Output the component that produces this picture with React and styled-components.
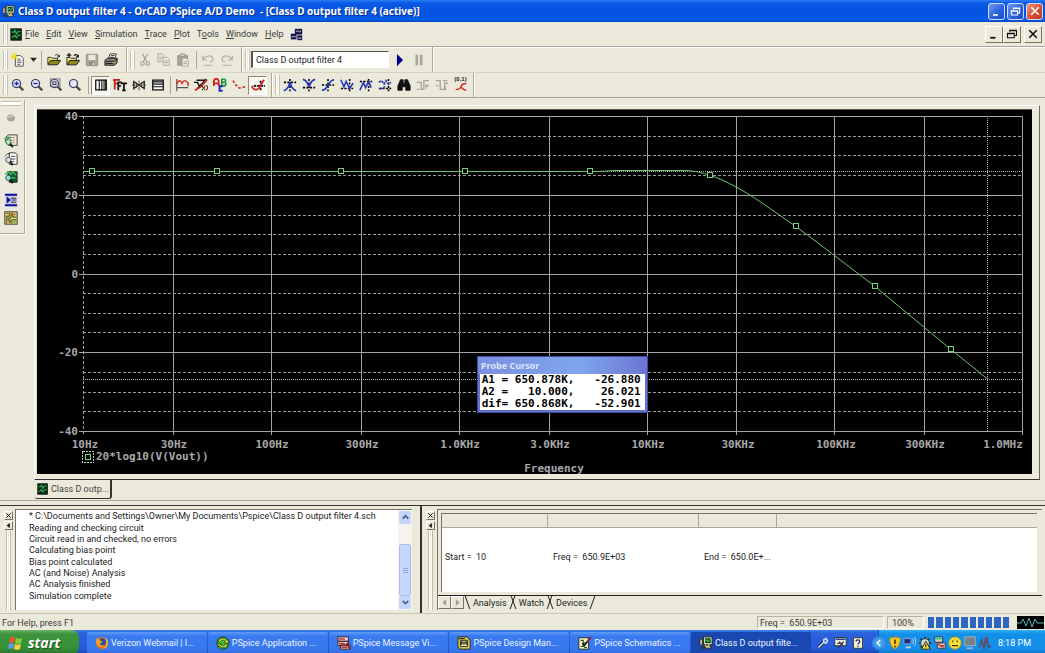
import React from 'react';
import styled, { createGlobalStyle, css } from 'styled-components';

const FACE = '#ebe9d9';
const SHADOW = '#aca899';
const UI_FONT = 'Roboto, "Liberation Sans", sans-serif';
const MONO_FONT = '"DejaVu Sans Mono", "Liberation Mono", monospace';

const GlobalStyle = createGlobalStyle`
  * { box-sizing: border-box; }
  body { margin: 0; background: ${FACE}; }
  button, input { font: inherit; color: inherit; margin: 0; padding: 0; }
  button { border: 0; background: none; }
  ul { list-style: none; margin: 0; padding: 0; }
`;

/* ---------- icons, all on a 16 x 16 grid ---------- */

const zoomGlass = (
  <>
    <path d="M9.5 9.5 14 14" stroke="#222" strokeWidth="2.4" />
    <path d="M10.5 10 14 13.4" stroke="#a98b3a" strokeWidth="1" />
    <circle cx="6.3" cy="6.3" r="4.6" fill="#e6e6f4" stroke="#333a66" strokeWidth="1.4" />
  </>
);

const cross = (x = 8, y = 8) => (
  <path d={`M${x} 1V15M1 ${y}H15`} stroke="#000" strokeWidth="1.8" strokeDasharray="2.5 1.5" />
);

const folder = (
  <>
    <path d="M1 13V5h4l1 1h6v3" fill="#f3e87a" stroke="#222" />
    <path d="M1 13.5 4 8.5h11.5L12 13.5Z" fill="#8f8a1c" stroke="#111" />
  </>
);

const page = (x, y) => (
  <path d={`M${x} ${y}h5l2 2v7h-7zM${x + 1.5} ${y + 4}h4M${x + 1.5} ${y + 6}h4`} fill={FACE} stroke="#aaa796" />
);

const scopeIcon = (
  <>
    <rect x="1" y="1" width="13" height="14" fill="#0b2a14" stroke="#111" />
    <path d="M2 5h3l1-2 2 4 2-3h3M2 11h2l2-2 2 3 2-3h3" fill="none" stroke="#35b04f" strokeWidth="1.5" />
  </>
);

const pcIcon = (
  <>
    <rect x="5" y="1" width="10" height="9" fill="#d8d4c4" stroke="#222" />
    <rect x="7" y="2.5" width="6.5" height="5.5" fill="#0b4a1c" />
    <path d="M7.5 6 9 4l1.5 2.5L13 3.5" fill="none" stroke="#5cf06d" />
    <path d="M1 3.5h3v7H1zM2 13h7l1-2h3l1 3H2z" fill="#c9c5b4" stroke="#222" />
    <path d="m7 10 2 3 3-4" fill="none" stroke="#d8cf32" strokeWidth="1.5" />
  </>
);

const ICONS = {
  app: pcIcon,
  scope: scopeIcon,
  windows: (
    <>
      <rect x="6" y="1" width="9" height="7" fill="#141450" />
      <rect x="1" y="7" width="7" height="7" fill="#141450" />
      <rect x="9" y="9" width="6" height="6" fill="#141450" />
      <path d="M7.5 5 9.5 3l2 2 2-1.5M2 11h2l1-1 2 1M10 12.5h4" fill="none" stroke="#fff" />
    </>
  ),
  new: (
    <>
      <path d="M5 3h6l3 3v9H5z" fill="#fff" stroke="#444" />
      <path d="M7 7h4M7 9h5M7 11h5M7 13h4" stroke="#555" />
      <path d="M4 0v8M0 4h8M1 1l6 6M7 1 1 7" stroke="#e7dc22" strokeWidth="1.2" />
    </>
  ),
  open: <>{folder}<path d="M9 3c2-2 4-1 5 1m0-2v2.5h-2.5" fill="none" stroke="#111" /></>,
  append: <>{folder}<path d="M3.5 0v5M1 2.5h5M9 3c2-2 4-1 5 1m0-2v2.5h-2.5" fill="none" stroke="#111" strokeWidth="1.4" /></>,
  save: (
    <>
      <path d="M1.5 1.5h13v13h-13z" fill="#aaa798" stroke="#8e8b7c" />
      <path d="M4 2h8v6H4z" fill={FACE} /><path d="M5 10h6v4H5z" fill="#8e8b7c" /><path d="M9 11h1.500v3H9z" fill={FACE} />
    </>
  ),
  print: (
    <>
      <path d="M5 7 7 1h7l-2 6" fill="#fff" stroke="#222" />
      <path d="M1 8.5 4 6h11v5l-3 3H1z" fill="#85857b" stroke="#111" />
      <path d="M2 9.5h9M2 12h9M12 9l3-2M8 3h4M7 5h4" stroke="#111" />
      <path d="M9 11h2" stroke="#e3da3d" />
    </>
  ),
  cut: <path d="m5 1 5 9M11 1 6 10M5 10a2 2 0 1 0 .1 4 2 2 0 0 0 0-4m6 0a2 2 0 1 0 .1 4 2 2 0 0 0 0-4" fill="none" stroke="#a5a293" strokeWidth="1.3" />,
  copy: <>{page(1, 1)}{page(7, 5)}</>,
  paste: (
    <>
      <path d="M2 3h11v11H2z" fill="#a8a596" stroke="#96937f" />
      <path d="M5 1h5v3H5z" fill="#d4d1c0" stroke="#96937f" />
      {page(7, 6)}
    </>
  ),
  undo: <path d="M2 3v5h5M2.5 7.5C5 3 11 2 13 5s0 5-3 5M3 14h10" fill="none" stroke="#b1ae9f" strokeWidth="1.4" />,
  redo: <path d="M14 3v5H9M13.500 7.500C11 3 5 2 3 5s0 5 3 5M3 14h10" fill="none" stroke="#b1ae9f" strokeWidth="1.400" />,
  play: <path d="M4.500 1v14l7-7z" fill="#00008c" />,
  pause: <path d="M4 2h3v12H4zM9 2h3v12H9z" fill="#aaa797" />,
  zoomIn: <>{zoomGlass}<path d="M4 6.300h4.600M6.300 4v4.600" stroke="#1818b8" strokeWidth="1.500" /></>,
  zoomOut: <>{zoomGlass}<path d="M4 6.300h4.600" stroke="#1818b8" strokeWidth="1.500" /></>,
  zoomArea: <>{zoomGlass}<rect x="1.500" y="1" width="11" height="9" fill="none" stroke="#6b6b88" /><rect x="4.500" y="4.500" width="3.500" height="3" fill="none" stroke="#222" /></>,
  zoomFit: zoomGlass,
  logX: (
    <>
      <path d="M2 2.500h12v11H2z" fill="#fff" stroke="#111" strokeWidth="1.500" />
      <path d="M6 2v12M9 2v12M11.500 2v12M13.500 2v12" stroke="#111" strokeWidth="1.300" />
    </>
  ),
  fft: (
    <>
      <path d="M2 13V2h6M2 6.500h4M0 2.500h3" fill="none" stroke="#c42020" strokeWidth="2" />
      <path d="M6 14V5h4M6 9h3M9 6h7M12.500 6v9M10.500 14h4" fill="none" stroke="#111" strokeWidth="2" />
    </>
  ),
  performance: (
    <>
      <path d="m2 4 12 8M2 12l12-8M2 3v10M14 3v10" fill="none" stroke="#222" strokeWidth="1.500" />
      <path d="M0 8h4m8 0h4M5 5v6M11 5v6M8 3v3M8 10v4" stroke="#333" />
    </>
  ),
  logY: (
    <>
      <path d="M2 2.500h12v11H2z" fill="#fff" stroke="#111" strokeWidth="1.500" />
      <path d="M2 4.500h12M2 7h12M2 10h12" stroke="#111" strokeWidth="1.300" />
    </>
  ),
  addTrace: <><path d="M2 1v14M2 11h13" stroke="#555" strokeWidth="1.300" /><path d="M2 7c2-5 4-5 6-1 2-4 4-4 7 0v3" fill="none" stroke="#d22" strokeWidth="1.700" /></>,
  evalFn: (
    <>
      <path d="M0 5h4l2 4M3 2.500h10M4 12 14 1" fill="none" stroke="#111" strokeWidth="1.600" />
      <path d="m1 14 7-4 7-8" fill="none" stroke="#c82020" strokeWidth="1.800" />
      <path d="m9 9 4 5M13 9l-4 5M14 8c2 2 2 4 0 6" fill="none" stroke="#6a2a22" strokeWidth="1.200" />
    </>
  ),
  label: (
    <>
      <path d="M1 9V3l1.500-2H5l1.500 2v6M1 6h5.500" fill="none" stroke="#d22020" strokeWidth="2" />
      <path d="M10 1.500V9h3.500l1.500-2-1.500-2H10h3.500l1-1.500-1-2z" fill="none" stroke="#14963a" strokeWidth="1.800" />
      <path d="M11 9.500H7.500v5H11" fill="none" stroke="#2222c8" strokeWidth="2.200" />
    </>
  ),
  marks: <path d="m1 3 3.500 5 4 3.500L15 10" fill="none" stroke="#d22" strokeWidth="1.800" strokeDasharray="3 2" />,
  cursor: (
    <>
      <path d="M11 3v12M3 9h13" stroke="#111" strokeWidth="2" strokeDasharray="3 1" />
      <path d="M1 9c1 5 7 6 9 1l5-8" fill="none" stroke="#d22" strokeWidth="2" />
    </>
  ),
  peak: <>{cross(8, 5)}<path d="M1 14.500c4-1 6-5 7-10 1 5 3 9 7 10" fill="none" stroke="#2436b8" strokeWidth="2" /></>,
  trough: <>{cross(8, 11)}<path d="M1 1.500c4 1 6 5 7 9 1-4 3-8 7-9" fill="none" stroke="#2436b8" strokeWidth="2" /></>,
  slope: <>{cross(8, 8)}<path d="M1 14c8 0 6-11 14-12" fill="none" stroke="#2436b8" strokeWidth="2" /></>,
  min: <>{cross(11, 12)}<path d="m1 2 3.500 8L7 4l4 8 4-6" fill="none" stroke="#2436b8" strokeWidth="1.800" /></>,
  max: <>{cross(11, 4)}<path d="m1 14 4-9 2.500 6L11 4l3 7" fill="none" stroke="#2436b8" strokeWidth="1.800" /></>,
  point: <>{cross(12, 12)}<path d="m1 5 3-2 3 4 2-4 3 4 3-2M2 12h4l2-3" fill="none" stroke="#2436b8" strokeWidth="1.800" strokeDasharray="3 1" /></>,
  search: <path d="M4 2h3v4h2V2h3l3 7v5h-5v-4H6v4H1V9zM3.500 10v2M12.500 10v2" fill="#111" stroke="#111" />,
  prevStep: <path d="M1 5h5v8h3V3h6M1 13h3M10 9h5M12 7v5" fill="none" stroke="#aaa797" strokeWidth="1.500" />,
  nextStep: <path d="M1 3h5v10h5V6h4M1 9h3M9 3h5M12 10v4" fill="none" stroke="#aaa797" strokeWidth="1.500" />,
  markPoint: <path d="M1 10c5 0 6-1 7-4s3-4 7-4M7 6c2 2 4 5 8 5" fill="none" stroke="#d22" strokeWidth="1.900" />,
  blob: <><ellipse cx="8" cy="8" rx="4.500" ry="4" fill="#aaa79a" /><path d="M5 8c1-2 3-3 5-2M10 5l3-1" fill="none" stroke="#eceadb" /></>,
  sideA: (
    <>
      <path d="M1 5 5 1h10v12H5z" fill="#e7ece4" stroke="#333" />
      <path d="M7 4h6M7 7h6M7 10h5" stroke="#c33" strokeDasharray="2 1" />
      <path d="M2 4h6M1 9l4-4" stroke="#209a45" strokeWidth="1.500" />
      <circle cx="5" cy="9" r="3" fill="#bfe6cc" stroke="#157a38" /><path d="m7 11 3 4" stroke="#111" strokeWidth="2" />
    </>
  ),
  sideB: (
    <>
      <path d="M6 1h7l2 2v11H6z" fill="#fff" stroke="#222" />
      <path d="M8 5h5M8 8h5M8 11h4M1 5l3-3h3" fill="none" stroke="#333" />
      <circle cx="5" cy="9" r="3" fill="#d6e8ef" stroke="#444" /><path d="m7 11 3 4" stroke="#111" strokeWidth="2" />
    </>
  ),
  sideC: (
    <>
      <path d="M4 2h11v12H6z" fill="#0c5c30" stroke="#222" />
      <path d="m1 5 4-3 3 3 2-3 4 4M8 9h5" fill="none" stroke="#46c060" strokeWidth="1.500" />
      <circle cx="5" cy="9" r="3" fill="#9cdcc8" stroke="#135a5a" /><path d="m7 11 3 4" stroke="#111" strokeWidth="2" />
    </>
  ),
  sideD: (
    <>
      <rect x="2" y="1" width="13" height="14" fill="#c8cbe8" />
      <path d="M1 2h14M1 14h14" stroke="#1010a0" strokeWidth="2.500" />
      <path d="m3 4 5 4-5 4z" fill="#1010a0" /><path d="M8 6h6M9 8h5M8 10.500h6" stroke="#222" />
    </>
  ),
  sideE: (
    <>
      <rect x="1" y="1" width="14" height="14" fill="#e8de78" stroke="#222" />
      <path d="M2 6h4V2M8 2v6H2M10 2v5h4M3 14v-4h4v4M9 14v-4h5" fill="none" stroke="#27331a" />
      <path d="M3 3h2M11 4h2M5 12h2" stroke="#d22" strokeWidth="1.500" />
      <path d="M9 5h1M11 12h2" stroke="#2a9a3c" strokeWidth="2" />
    </>
  ),
  firefox: (
    <>
      <circle cx="8" cy="8" r="7" fill="#e8701a" />
      <circle cx="8.500" cy="6.500" r="4" fill="#2d4fa6" />
      <path d="M1 6c1 6 6 8 10 5-4 1-6-1-5-3l3-1-3-2C4 4 3 3 3 2 1 3 1 5 1 6" fill="#f3a12c" />
      <path d="M12 3c3 3 3 8-1 11" fill="none" stroke="#f6c544" strokeWidth="1.300" />
    </>
  ),
  arrows: (
    <>
      <circle cx="8" cy="8" r="7" fill="#49c93c" stroke="#0b3b12" />
      <path d="M3 7c0-5 7-6 9-2l2-1v4H9l2-2C9 4 6 4 5 7z" fill="#f4ef32" stroke="#0d3314" strokeWidth=".8" />
      <path d="M13 9c0 5-7 6-9 2l-2 1V9h5l-2 1c2 2 5 2 6-1z" fill="#f4ef32" stroke="#0d3314" strokeWidth=".8" />
    </>
  ),
  message: (
    <>
      <path d="M1 1h12v5H1zM1 6h12v5H1zM4 10h11v5H4z" fill="#e6e2dc" stroke="#431414" />
      <path d="M2 3.500h7M2 8.500h7M5 13h7" stroke="#c63030" strokeWidth="1.800" />
      <path d="m11 8 4 7" stroke="#7b2020" strokeWidth="2" />
    </>
  ),
  design: (
    <>
      <path d="M1 1h11l3 4v10H3L1 12z" fill="#d7c75b" stroke="#201d08" />
      <path d="M4 5h8v7H4z" fill="#f6f1c0" stroke="#222" />
      <path d="M5 10V7h2v3m2 0V7h2v3M2 3h7" fill="none" stroke="#30300f" strokeWidth="1.300" />
    </>
  ),
  schematic: (
    <>
      <path d="M1 2h11v13H1z" fill="#f2f3c4" stroke="#222" />
      <path d="M3 5h3v3h3M3 12h3v-2M7 13h3" fill="none" stroke="#2d4b1c" strokeWidth="1.200" />
      <path d="m5 8 2 3 7-9" fill="none" stroke="#111" strokeWidth="2" /><path d="m10 7 5-6" stroke="#c22a2a" strokeWidth="1.500" />
    </>
  ),
  pen: <><path d="m2 14 7-7" stroke="#1d2030" strokeWidth="4" /><path d="m2 14 7-7 3 1 2-3-2-3-3 2v3" fill="none" stroke="#dfe6f6" strokeWidth="2" /></>,
  desktop: (
    <>
      <rect x="1" y="2" width="14" height="10" fill="#f2f0e5" stroke="#222" />
      <path d="M2 4h12" stroke="#26408f" strokeWidth="2" />
      <path d="m5 15 7-8M6 7l5 4M4 9h3" stroke="#333" strokeWidth="1.600" />
    </>
  ),
  help: (
    <>
      <path d="M2 1h12v14H2z" fill="#f8f3ca" stroke="#222" />
      <path d="M5.500 6c0-3 5-3 5 0 0 2-2.500 2-2.500 4m0 1.500v1.800" fill="none" stroke="#1a2c7a" strokeWidth="1.800" />
    </>
  ),
  shield: <><path d="M8 1c3 1 5 1 6 1 0 6-1 10-6 13C3 12 2 8 2 2c2 0 4 0 6-1" fill="#f4c92b" stroke="#b58110" /><path d="M8 4v5m0 2v2" stroke="#5d3f00" strokeWidth="2" /></>,
  network: (
    <>
      <path d="M1 3h8v6H1z" fill="#1c2f7c" stroke="#8fa9df" /><path d="M3 12h6v2H3z" fill="#c8ccd6" />
      <path d="M11 3c1 2 1 4 0 6m2-8c2 3 2 7 0 10" fill="none" stroke="#c9dbf8" />
    </>
  ),
  gear: (
    <>
      <path d="M8 1v14M1 8h14M3 3l10 10M13 3 3 13" stroke="#333" strokeWidth="2" />
      <circle cx="8" cy="8" r="5" fill="#d7d4c6" stroke="#333" /><path d="m9 6 5 9H4z" fill="#f4e02e" stroke="#222" /><path d="M9 9v4" stroke="#111" />
    </>
  ),
  remote: (
    <>
      <path d="M2 1h9v6H2zM5 8h9v6H5z" fill="#d8d5c6" stroke="#333" />
      <path d="M3 3h7" stroke="#2c8" strokeWidth="2" /><path d="m4 8 8 5M7 11h6" stroke="#c33" strokeWidth="1.600" />
    </>
  ),
  smiley: <><circle cx="8" cy="8" r="7" fill="#fbdf35" stroke="#c39a12" /><path d="M5.500 5v2M10.500 5v2M4.500 11h7" stroke="#3d2e00" strokeWidth="1.300" /></>,
  monitor: <><rect x="2" y="1" width="12" height="10" fill="#768089" stroke="#a9b3bd" /><path d="M4 14h7" stroke="#a9b3bd" strokeWidth="2" /></>,
  spikes: <><path d="m1 13 3-8 3 9 3-12 2 11 3-2" fill="none" stroke="#3b5a86" strokeWidth="2.200" /><path d="m5 13 4-11 3 8" fill="none" stroke="#9a3c3c" strokeWidth="1.200" /></>,
  minimize: <path d="M3 13h7" stroke="currentColor" strokeWidth="2.400" />,
  restore: <path d="M5 5V3h9v7h-3M2 7h9v6H2zM5 3.500h9M2 7.500h9" fill="none" stroke="currentColor" strokeWidth="1.500" />,
  close: <path d="m3 3 10 10M13 3 3 13" stroke="currentColor" strokeWidth="2.200" />,
  left: <path d="M11 2v12L4 8z" fill="currentColor" />,
  right: <path d="M5 2v12l7-6z" fill="currentColor" />,
  down: <path d="M2 5h12l-6 7z" fill="currentColor" />,
  chevronUp: <path d="m3 10 5-5 5 5" fill="none" stroke="#4d6185" strokeWidth="3" />,
  chevronDown: <path d="m3 5 5 5 5-5" fill="none" stroke="#4d6185" strokeWidth="3" />,
  chevronLeft: <path d="M10 3 5 8l5 5" fill="none" stroke="#fff" strokeWidth="2.200" />,
};

const Svg = styled.svg`
  display: block;
  flex: none;
  width: ${({ $size }) => $size}px;
  height: ${({ $size }) => $size}px;
`;

const Icon = ({ name, size = 14 }) => (
  <Svg $size={size} viewBox="0 0 16 16" fill="none" aria-hidden="true">
    {ICONS[name]}
  </Svg>
);

/* ---------- window frame ---------- */

const Desktop = styled.div`
  display: flex;
  flex-direction: column;
  min-height: 100vh;
  background: ${FACE};
  color: #222;
  font: 9px/12px ${UI_FONT};
  cursor: default;
`;

const TitleBar = styled.header`
  display: flex;
  align-items: center;
  height: 22px;
  padding: 0 2px;
  gap: 3px;
  background: linear-gradient(#2a7cf4 0, #0a5ae6 3px, #0351e0 14px, #0660f4 19px, #0546c4 22px);
`;

const Title = styled.h1`
  flex: 1;
  margin: 0;
  color: #fff;
  font: bold 10px/20px "Noto Sans", "Open Sans", sans-serif;
  text-shadow: 1px 1px #0a2f8c;
  white-space: pre;
`;

const CaptionButton = styled.button`
  display: grid;
  place-items: center;
  width: 17px;
  height: 17px;
  border: 1px solid #cfdcf8;
  border-radius: 3px;
  color: #fff;
  background: ${({ $close }) =>
    $close ? 'linear-gradient(135deg, #ee9a80, #d8492a 60%, #c23c1c)' : 'linear-gradient(135deg, #6f9bf2, #2a5fdc 60%, #1d4fc4)'};
`;

const CaptionGroup = styled.div`
  display: flex;
  gap: 2px;
`;

const MenuBar = styled.nav`
  display: flex;
  align-items: center;
  height: 25px;
  padding: 0 3px;
  border-bottom: 1px solid ${SHADOW};
  box-shadow: 0 1px #fff;
`;

const MenuList = styled.ul`
  display: flex;
  flex: 1;
  align-items: center;
  gap: 7px;
  padding-left: 2px;
  color: #3c3c3c;
`;

const MdiButton = styled.button`
  display: grid;
  place-items: center;
  width: 18px;
  height: 17px;
  color: #111;
  border: 1px solid;
  border-color: #fff #77745f #77745f #fff;
  margin-left: ${({ $apart }) => ($apart ? 3 : 0)}px;
`;

/* ---------- toolbars ---------- */

const ToolRow = styled.div`
  display: flex;
  height: ${({ $height }) => $height}px;
  border-bottom: 1px solid ${({ $last }) => ($last ? '#a9a694' : '#d6d3c2')};
`;

const Toolbar = styled.div`
  display: flex;
  align-items: center;
  padding: 0 ${({ $end = 4 }) => $end}px 0 3px;
  border-right: 1px solid ${SHADOW};
  box-shadow: 1px 0 #fff;
`;

const Grip = styled.span`
  flex: none;
  width: 5px;
  height: 20px;
  margin-right: ${({ $gap = 1 }) => $gap}px;
  border: solid #c4c1b0;
  border-width: 0 1px;
  background: linear-gradient(90deg, #fff 1px, transparent 1px 2px, #fff 2px);
`;

const Divider = styled.span`
  width: 1px;
  height: 18px;
  margin: 0 ${({ $after = 2 }) => $after}px 0 ${({ $before = 3 }) => $before}px;
  background: ${SHADOW};
`;

const ToolButton = styled.button`
  display: grid;
  place-items: center;
  width: ${({ $narrow }) => ($narrow ? 12 : 19)}px;
  height: 19px;
  border: 1px solid transparent;
  ${({ $pressed }) =>
    $pressed &&
    css`
      border-color: #8e8b7a #fff #fff #8e8b7a;
      background: #f8f7f0;
    `}
`;

const PointLabel = styled.span`
  height: 5px;
  color: #222;
  font: bold 6px/5px "Liberation Sans", sans-serif;
`;

const ProfileInput = styled.input`
  width: 138px;
  height: 17px;
  margin-right: 1px;
  padding: 0 3px !important;
  border: 1px solid;
  border-color: #55534a #fff #fff #55534a;
  border-left-width: 2px;
  outline: 0;
  background: #fff;
`;

const tools = (names, pressed = []) =>
  names.map((name) => (
    <ToolButton key={name} type="button" title={name} aria-label={name} $pressed={pressed.includes(name)}>
      <Icon name={name} />
    </ToolButton>
  ));

/* ---------- plot ---------- */

const Workspace = styled.main`
  display: flex;
  flex: 1;
  gap: 9px;
  padding-right: 5px;
`;

const SideBar = styled.aside`
  display: flex;
  flex-direction: column;
  align-items: center;
  align-self: flex-start;
  width: 25px;
  margin-top: 2px;
  padding: 1px 2px 6px 0;
  border: solid ${SHADOW};
  border-width: 0 1px 1px 0;
  box-shadow: 1px 1px #fff;
`;

const SideGrip = styled.span`
  width: 20px;
  height: 5px;
  border: solid #c4c1b0;
  border-width: 1px 0;
  background: #fff;
`;

const SideGroup = styled.div`
  display: grid;
  grid-auto-rows: 18px;
  place-items: center;
  margin-top: ${({ $top }) => $top}px;
`;

const Document = styled.div`
  flex: 1;
  min-width: 0;
  padding-top: 7px;
`;

const PlotFrame = styled.section`
  position: relative;
  padding: 3px 7px 5px 2px;
  border: 1px solid;
  border-color: #fff #6c6a5c #33322c #fff;
`;

const PlotSvg = styled.svg`
  display: block;
  width: 100%;
  height: auto;
  background: #000;
  border-top: 1px solid #5a584d;
  text {
    fill: #a8a8a8;
    font: bold 11px ${MONO_FONT};
  }
`;

const Probe = styled.div`
  position: absolute;
  top: 67%;
  left: 44%;
  padding: 0 2px 2px;
  background: #6373cc;
  border: 1px solid #3e4b9d;
`;

const ProbeTitle = styled.div`
  height: 17px;
  margin: 0 -2px;
  padding: 0 3px;
  background: linear-gradient(90deg, #7b8fe0, #7ea6ec 60%, #6c74d2);
  color: #dbe5fb;
  font: bold 9px/18px "Open Sans", "Noto Sans", sans-serif;
`;

const ProbeBody = styled.pre`
  margin: 0;
  padding: 0 4px 0 2px;
  background: #fff;
  color: #000;
  font: bold 11px/12px ${MONO_FONT};
`;

const V_LINES = [
  [46, '10Hz', 48], [136, '30Hz', 137], [234, '100Hz', 235], [324, '300Hz', 325], [422, '1.0KHz', 423],
  [512, '3.0KHz', 513], [610, '10KHz', 611], [699, '30KHz', 701], [797, '100KHz', 799], [887, '300KHz', 888], [985, '1.0MHz', 966],
];
const H_LINES = [[6, '40'], [85, '20'], [164, '0'], [242, '-20'], [321, '-40']];
const MINOR = [26, 45, 65, 105, 124, 144, 183, 203, 222, 262, 282, 301];
const MARKS = [[55, 61], [180, 61], [304, 61], [428, 61], [553, 61], [673, 65], [759, 116], [838, 176], [914, 239]];

const Plot = () => (
  <PlotSvg viewBox="0 0 995 364" role="img" aria-label="20*log10(V(Vout)) against frequency">
    <g stroke="#a3a3a3" shapeRendering="crispEdges">
      {V_LINES.map(([x], i) => (
        <path key={x} d={`M${x}.5 6V325`} strokeDasharray={i ? undefined : '3 2'} />
      ))}
      {H_LINES.map(([y]) => <path key={y} d={`M42 ${y}.5H985`} />)}
      {MINOR.map((y) => <path key={y} d={`M46 ${y}.5H985`} stroke="#9a9a9a" strokeDasharray="3 2" />)}
      <path d="M46 61.5H985M46 269.5H985M950.5 6V321" stroke="#b5b5b5" strokeDasharray="1 1" />
    </g>
    <path
      d="M46 61.5H562L578 60.5H646C658 60.5 666 63 673 65.5C682 68 690 72 700 77.5C712 84 724 92 738 102L759 116.5L797.5 145.5L838 176.5L887.5 217.5L914 239.5L950.5 269"
      fill="none"
      stroke="#6fc46f"
    />
    <g fill="#000" stroke="#7ad07a" shapeRendering="crispEdges">
      {MARKS.map(([x, y]) => <rect key={x} x={x - 2.5} y={y - 2.5} width="5" height="5" />)}
      <rect x="48.5" y="344.5" width="5" height="5" />
      <rect x="45.5" y="341.5" width="11" height="11" fill="none" stroke="#b9cdb9" strokeDasharray="2 1" />
    </g>
    {H_LINES.map(([y, label]) => <text key={label} x="41" y={y + 4} textAnchor="end">{label}</text>)}
    {V_LINES.map(([, label, x]) => <text key={label} x={x} y="338" textAnchor="middle">{label}</text>)}
    <text x="59" y="350">20*log10(V(Vout))</text>
    <text x="517" y="362" textAnchor="middle">Frequency</text>
  </PlotSvg>
);

const DocTab = styled.button`
  display: flex;
  align-items: center;
  gap: 2px;
  height: 19px;
  margin-left: 1px;
  padding: 0 1px 0 2px !important;
  border: solid #33322c;
  border-width: 0 2px 1px 0;
  border-radius: 0 0 3px 2px;
  color: #444;
`;

/* ---------- docked panes ---------- */

const Dock = styled.div`
  display: flex;
  height: 113px;
  margin-top: 1px;
  padding-top: 4px;
  border-top: 1px solid ${SHADOW};
`;

const Pane = styled.section`
  display: flex;
  flex: ${({ $grow }) => $grow};
  min-width: 0;
  padding: 3px 8px 3px 3px;
  gap: 2px;
  border: solid #33322c;
  border-width: 1px ${({ $edge }) => ($edge ? 2 : 0)}px 0 0;
`;

const PaneHandle = styled.div`
  display: flex;
  flex-direction: column;
  align-items: center;
  gap: 1px;
  width: 10px;
  padding-top: 2px;
`;

const TinyButton = styled.button`
  display: grid;
  place-items: center;
  width: 9px;
  height: 9px;
  border: 1px solid;
  border-color: #fff #77745f #77745f #fff;
  color: #111;
`;

const HandleBars = styled.span`
  flex: 1;
  width: 5px;
  border: solid #c0bdac;
  border-width: 0 1px;
  background: linear-gradient(90deg, #fff 1px, transparent 1px 2px, #fff 2px);
`;

const LogBox = styled.div`
  display: flex;
  flex: 1;
  min-width: 0;
  background: #fff;
  border: solid #77745f;
  border-width: 1px 0 0 1px;
`;

const Log = styled.ul`
  display: grid;
  flex: 1;
  grid-auto-rows: 1fr;
  align-items: center;
  padding: 1px 0 8px 13px;
  color: #222;
  line-height: 11px;
  white-space: nowrap;
  overflow: hidden;
`;

const ScrollBar = styled.div`
  display: flex;
  flex-direction: column;
  width: 14px;
  padding: 1px;
  background: #f4f3ee;
`;

const ScrollButton = styled.button`
  display: grid;
  place-items: center;
  height: 13px;
  border-radius: 2px;
  background: #c4d4fb;
`;

const ScrollThumb = styled.div`
  display: grid;
  place-content: center;
  gap: 1px;
  flex: 1;
  margin-top: 20px;
  border: 1px solid #a9bff2;
  border-radius: 2px;
  background: #c6d6fc;
  i { width: 5px; height: 1px; background: #8fa8e4; }
`;

const Sheet = styled.div`
  display: flex;
  flex: 1;
  flex-direction: column;
  min-width: 0;
  border: solid #77745f;
  border-width: 1px 0 0 1px;
  margin-right: -5px;
`;

const GridWell = styled.div`
  flex: 1;
  margin: 3px 5px 3px 3px;
  background: #fff;
  border: solid #77745f;
  border-width: 1px 0 0 1px;
`;

const DataTable = styled.table`
  width: 100%;
  table-layout: fixed;
  border-collapse: collapse;
  color: #222;
  th {
    height: 13px;
    padding: 0;
    background: ${FACE};
    border: solid ${SHADOW};
    border-width: 0 1px 1px 0;
  }
  th:last-child { border-right: 0; }
  td { height: 60px; padding: 0 0 0 6px; white-space: pre; }
  td:first-child { padding-left: 3px; }
`;

const Column = styled.col`
  width: ${({ $width }) => $width};
`;

const SheetTabs = styled.div`
  display: flex;
  height: 15px;
  border-top: 1px solid #222;
`;

const NavButton = styled(TinyButton)`
  width: 13px;
  height: 13px;
  color: #a5a293;
`;

const SheetTab = styled.button`
  position: relative;
  height: 13px;
  padding: 0 3px 0 9px !important;
  color: #222;
  &::before, &::after {
    content: '';
    position: absolute;
    top: 0;
    height: 13px;
    border-left: 1px solid #222;
  }
  &::before { left: 3px; transform: skewX(20deg); }
  &::after { right: -3px; transform: skewX(-20deg); }
`;

/* ---------- status bar and taskbar ---------- */

const StatusBar = styled.footer`
  display: flex;
  gap: 3px;
  height: 17px;
  padding: 2px 1px 1px;
  border-top: 1px solid #c9c6b5;
  color: #3c3c3c;
  line-height: 12px;
`;

const StatusCell = styled.div`
  flex: ${({ $width }) => ($width ? `0 0 ${$width}px` : 1)};
  padding: 0 ${({ $pad = 2 }) => $pad}px;
  border: solid;
  border-width: 1px;
  border-color: ${({ $flat }) => ($flat ? 'transparent' : '#b7b4a3 #fff #fff #b7b4a3')};
  white-space: pre;
`;

const Progress = styled.div`
  display: grid;
  grid-template-columns: repeat(10, 1fr);
  gap: 2px;
  width: 83px;
  padding: 1px;
  i { background: #2c66c4; }
`;

const Wave = styled.svg`
  width: 27px;
  height: 13px;
  margin-left: 4px;
  background: #000;
`;

const TaskBar = styled.footer`
  display: flex;
  height: 25px;
  background: linear-gradient(#3d82ee 0, #2c62dc 3px, #255adb 18px, #1b44a8);
  color: #fff;
`;

const StartButton = styled.button`
  display: flex;
  align-items: center;
  gap: 4px;
  width: 79px;
  padding-left: 8px !important;
  border-radius: 0 8px 8px 0;
  background: linear-gradient(#6db568 0, #3c953c 4px, #369036 18px, #2a722c);
  color: #fff;
  font: italic bold 14px/24px "Open Sans", "Noto Sans", sans-serif !important;
  text-shadow: 1px 1px 1px #1c4d1c;
`;

const Tasks = styled.div`
  display: grid;
  flex: 1;
  grid-template-columns: repeat(6, minmax(0, 1fr));
  gap: 1px;
  padding: 2px 6px 1px 8px;
`;

const Task = styled.button`
  display: flex;
  align-items: center;
  gap: 2px;
  min-width: 0;
  padding: 0 8px !important;
  border-radius: 2px;
  background: ${({ $active }) => ($active ? '#1a48b2' : 'linear-gradient(#5f9bf8, #3a7af0 4px, #3878ee 18px, #2f69da)')};
  color: #eef3ff;
  white-space: nowrap;
`;

const Quick = styled.div`
  display: flex;
  align-items: center;
  gap: 5px;
  padding-right: 14px;
`;

const Tray = styled.div`
  display: flex;
  align-items: center;
  gap: 1px;
  padding-right: 14px;
  background: linear-gradient(#2fb0f6 0, #1290e8 4px, #1490ea 18px, #0f72c4);
  border-left: 1px solid #0d5cb4;
`;

const TrayToggle = styled.button`
  display: grid;
  place-items: center;
  width: 14px;
  height: 14px;
  margin: 0 1px 0 -7px !important;
  border-radius: 50%;
  background: radial-gradient(#58b8f8, #1c70d8);
`;

const Clock = styled.time`
  margin-left: 5px;
  white-space: nowrap;
`;

const MENUS = [
  ['', 'F', 'ile'], ['', 'E', 'dit'], ['', 'V', 'iew'], ['', 'S', 'imulation'], ['', 'T', 'race'],
  ['', 'P', 'lot'], ['T', 'o', 'ols'], ['', 'W', 'indow'], ['', 'H', 'elp'],
];

const LOG_LINES = [
  '* C:\\Documents and Settings\\Owner\\My Documents\\Pspice\\Class D output filter 4.sch',
  'Reading and checking circuit',
  'Circuit read in and checked, no errors',
  'Calculating bias point',
  'Bias point calculated',
  'AC (and Noise) Analysis',
  'AC Analysis finished',
  'Simulation complete',
];

const TASKS = [
  ['firefox', 'Verizon Webmail | I...'],
  ['arrows', 'PSpice Application ...'],
  ['message', 'PSpice Message Vi...'],
  ['design', 'PSpice Design Man...'],
  ['schematic', 'PSpice Schematics ...'],
  ['app', 'Class D output filte...'],
];

const Handle = () => (
  <PaneHandle>
    <TinyButton type="button" aria-label="Close pane"><Icon name="close" size={7} /></TinyButton>
    <TinyButton type="button" aria-label="Collapse pane"><Icon name="left" size={7} /></TinyButton>
    <HandleBars />
  </PaneHandle>
);

const App = () => (
  <Desktop>
    <GlobalStyle />
    <TitleBar>
      <Icon name="app" size={13} />
      <Title>Class D output filter 4 - OrCAD PSpice A/D Demo  - [Class D output filter 4 (active)]</Title>
      <CaptionGroup>
        <CaptionButton type="button" aria-label="Minimize"><Icon name="minimize" size={11} /></CaptionButton>
        <CaptionButton type="button" aria-label="Restore"><Icon name="restore" size={11} /></CaptionButton>
        <CaptionButton type="button" aria-label="Close" $close><Icon name="close" size={12} /></CaptionButton>
      </CaptionGroup>
    </TitleBar>

    <MenuBar>
      <Grip $gap={2} />
      <Icon name="scope" size={13} />
      <MenuList>
        {MENUS.map(([before, key, after]) => (
          <li key={key + after}>
            <button type="button">{before}<u>{key}</u>{after}</button>
          </li>
        ))}
        <li><Icon name="windows" size={13} /></li>
      </MenuList>
      <MdiButton type="button" aria-label="Minimize document"><Icon name="minimize" size={12} /></MdiButton>
      <MdiButton type="button" aria-label="Restore document"><Icon name="restore" size={12} /></MdiButton>
      <MdiButton type="button" aria-label="Close document" $apart><Icon name="close" size={12} /></MdiButton>
    </MenuBar>

    <ToolRow $height={26}>
      <Toolbar $end={6}>
        <Grip $gap={0} />
        {tools(['new'])}
        <ToolButton type="button" aria-label="New options" $narrow><Icon name="down" size={9} /></ToolButton>
        <Divider $before={2} $after={2} />
        {tools(['open', 'append', 'save', 'print'])}
      </Toolbar>
      <Toolbar $end={5}>
        <Grip $gap={0} />
        {tools(['cut', 'copy', 'paste'])}
        <Divider $before={4} $after={1} />
        {tools(['undo', 'redo'])}
      </Toolbar>
      <Toolbar $end={4}>
        <Grip $gap={1} />
        <ProfileInput aria-label="Simulation profile" defaultValue="Class D output filter 4" />
        {tools(['play', 'pause'])}
      </Toolbar>
    </ToolRow>

    <ToolRow $height={25} $last>
      <Toolbar $end={4}>
        <Grip $gap={0} />
        {tools(['zoomIn', 'zoomOut', 'zoomArea', 'zoomFit'])}
        <Divider $before={4} $after={2} />
        {tools(['logX', 'fft', 'performance', 'logY'], ['logX'])}
        <Divider $before={3} $after={1} />
        {tools(['addTrace', 'evalFn', 'label', 'marks', 'cursor'], ['cursor'])}
      </Toolbar>
      <Toolbar $end={3}>
        <Grip $gap={0} />
        {tools(['peak', 'trough', 'slope', 'min', 'max', 'point', 'search', 'prevStep', 'nextStep'])}
        <ToolButton type="button" aria-label="Mark data point">
          <PointLabel>(0,1)</PointLabel>
          <Icon name="markPoint" size={12} />
        </ToolButton>
      </Toolbar>
    </ToolRow>

    <Workspace>
      <SideBar>
        <SideGrip />
        <SideGroup $top={3}>{tools(['blob'])}</SideGroup>
        <SideGroup $top={5}>{tools(['sideA', 'sideB', 'sideC'])}</SideGroup>
        <SideGroup $top={5}>{tools(['sideD', 'sideE'])}</SideGroup>
      </SideBar>
      <Document>
        <PlotFrame>
          <Plot />
          <Probe>
            <ProbeTitle>Probe Cursor</ProbeTitle>
            <ProbeBody>
              {'A1 = 650.878K,   -26.880\nA2 =   10.000,    26.021\ndif= 650.868K,   -52.901'}
            </ProbeBody>
          </Probe>
        </PlotFrame>
        <DocTab type="button"><Icon name="scope" size={12} />Class D outp...</DocTab>
      </Document>
    </Workspace>

    <Dock>
      <Pane $grow={409} $edge>
        <Handle />
        <LogBox>
          <Log>{LOG_LINES.map((line) => <li key={line}>{line}</li>)}</Log>
          <ScrollBar>
            <ScrollButton type="button" aria-label="Scroll up"><Icon name="chevronUp" size={9} /></ScrollButton>
            <ScrollThumb><i /><i /><i /></ScrollThumb>
            <ScrollButton type="button" aria-label="Scroll down"><Icon name="chevronDown" size={9} /></ScrollButton>
          </ScrollBar>
        </LogBox>
      </Pane>
      <Pane $grow={612}>
        <Handle />
        <Sheet>
          <GridWell>
            <DataTable>
              <colgroup>
                <Column $width="105px" />
                <Column $width="151px" />
                <Column $width="78px" />
                <Column $width="auto" />
              </colgroup>
              <thead>
                <tr><th /><th /><th /><th /></tr>
              </thead>
              <tbody>
                <tr>
                  <td>Start =  10</td>
                  <td>Freq =  650.9E+03</td>
                  <td>End =  650.0E+...</td>
                  <td />
                </tr>
              </tbody>
            </DataTable>
          </GridWell>
          <SheetTabs>
            <NavButton type="button" aria-label="Previous sheet"><Icon name="left" size={9} /></NavButton>
            <NavButton type="button" aria-label="Next sheet"><Icon name="right" size={9} /></NavButton>
            <SheetTab type="button">Analysis</SheetTab>
            <SheetTab type="button">Watch</SheetTab>
            <SheetTab type="button">Devices</SheetTab>
          </SheetTabs>
        </Sheet>
      </Pane>
    </Dock>

    <StatusBar>
      <StatusCell $flat $pad={0}>For Help, press F1</StatusCell>
      <StatusCell $width={127}>Freq =  650.9E+03</StatusCell>
      <StatusCell $width={37} $pad={4}>100%</StatusCell>
      <Progress>{Array.from({ length: 10 }, (_, i) => <i key={i} />)}</Progress>
      <Wave viewBox="0 0 27 13">
        <path d="M0 7h4l2-4 3 7 3-8 3 9 3-8 2 4h7" fill="none" stroke="#58b4c8" />
      </Wave>
    </StatusBar>

    <TaskBar>
      <StartButton type="button">
        <Svg $size={16} viewBox="0 0 16 16" aria-hidden="true">
          <path d="M2 3c2-2 4-1 5 0L6 8C5 7 3 7 1 8z" fill="#f0562c" />
          <path d="M8 3c2 1 4 1 6 0l-1 5c-2 1-4 1-6 0z" fill="#8ccf3c" />
          <path d="M1 9c2-1 4-1 5 0l-1 5c-2-1-3-1-5 0z" fill="#5c9cf4" />
          <path d="M7 9c2 1 4 1 6 0l-1 5c-2 1-4 1-6 0z" fill="#fbd13c" />
        </Svg>
        start
      </StartButton>
      <Tasks>
        {TASKS.map(([icon, label]) => (
          <Task key={label} type="button" $active={icon === 'app'}>
            <Icon name={icon} />
            {label}
          </Task>
        ))}
      </Tasks>
      <Quick>
        <Icon name="pen" size={12} />
        <Icon name="desktop" size={13} />
        <Icon name="help" size={12} />
      </Quick>
      <Tray>
        <TrayToggle type="button" aria-label="Show hidden icons"><Icon name="chevronLeft" size={10} /></TrayToggle>
        {['shield', 'network', 'gear', 'remote', 'smiley', 'monitor', 'spikes'].map((name) => (
          <Icon key={name} name={name} />
        ))}
        <Clock>8:18 PM</Clock>
      </Tray>
    </TaskBar>
  </Desktop>
);

export default App;
